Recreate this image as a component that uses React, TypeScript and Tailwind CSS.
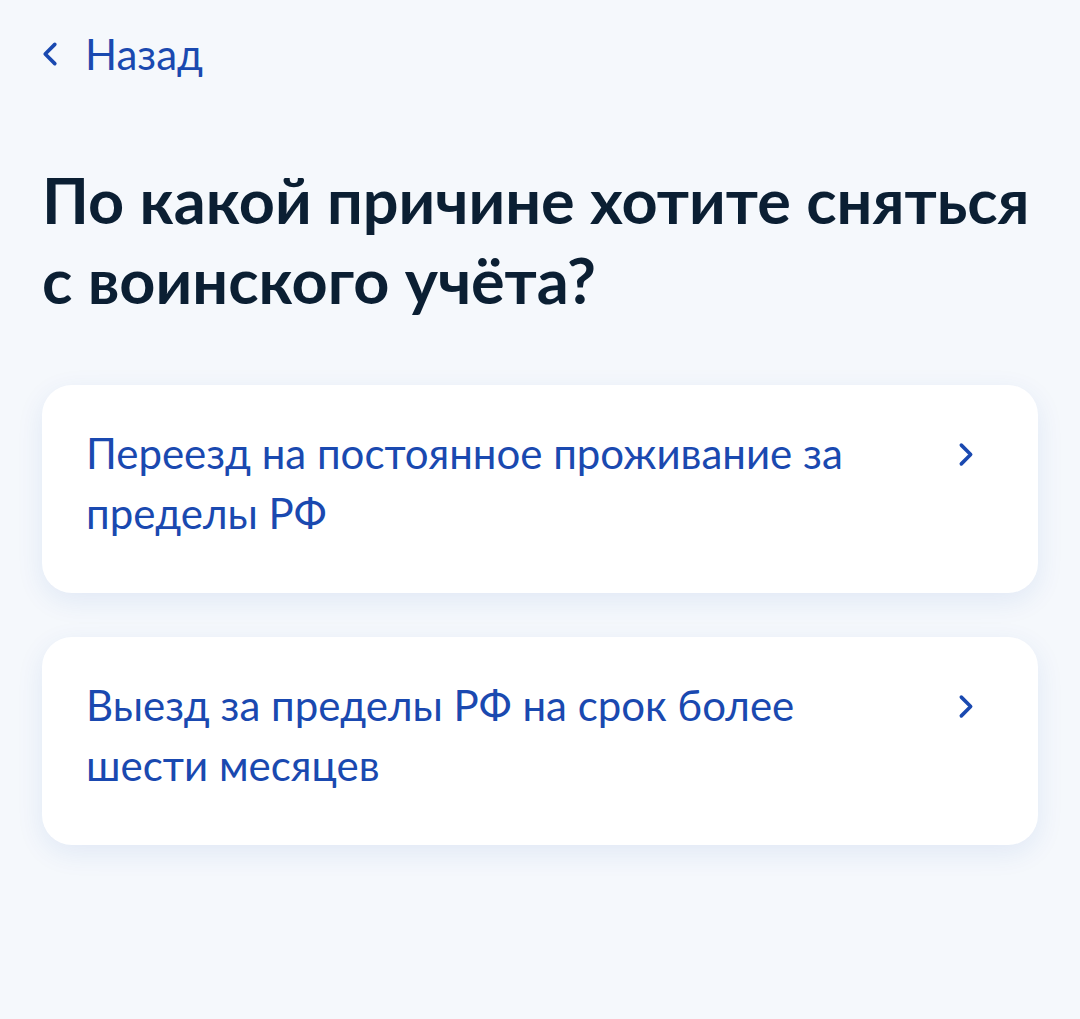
const reasons = [
  'Переезд на постоянное проживание за пределы РФ',
  'Выезд за пределы РФ на срок более шести месяцев',
];

function Chevron({ left = false, className = '' }: { left?: boolean; className?: string }) {
  return (
    <svg className={className} viewBox="0 0 15 24" fill="none" stroke="currentColor" strokeWidth={3.4} strokeLinecap="round" strokeLinejoin="round">
      <polyline points={left ? '12,3 3,12 12,21' : '3,3 12,12 3,21'} />
    </svg>
  );
}

export default function App() {
  return (
    <div
      className="min-h-screen bg-[#f5f8fc] px-[42px] pt-[28px]"
      style={{ fontFamily: 'Lato, "Noto Sans", sans-serif' }}
    >
      {/* Back link */}
      <button className="flex items-center text-[#1a49b0]">
        <Chevron left className="h-[26px] w-[16px] shrink-0" />
        <span className="ml-[27px] text-[42px] leading-[52px]">Назад</span>
      </button>

      <h1 className="mt-[80px] text-[63px] font-bold leading-[80px] text-[#0b1f33]">
        По какой причине хотите сняться с воинского учёта?
      </h1>

      <div className="mt-[65px] flex flex-col gap-[44px]">
        {reasons.map((reason) => (
          <button
            key={reason}
            className="flex min-h-[208px] items-start justify-between rounded-[30px] bg-white pl-[44px] pr-[64px] pt-[38px] text-left shadow-[0_8px_28px_rgba(26,73,176,0.09)]"
          >
            <span className="max-w-[790px] text-[42px] leading-[60px] text-[#1a49b0]">{reason}</span>
            <Chevron className="mt-[19px] h-[25px] w-[16px] shrink-0 text-[#1a49b0]" />
          </button>
        ))}
      </div>
    </div>
  );
}
